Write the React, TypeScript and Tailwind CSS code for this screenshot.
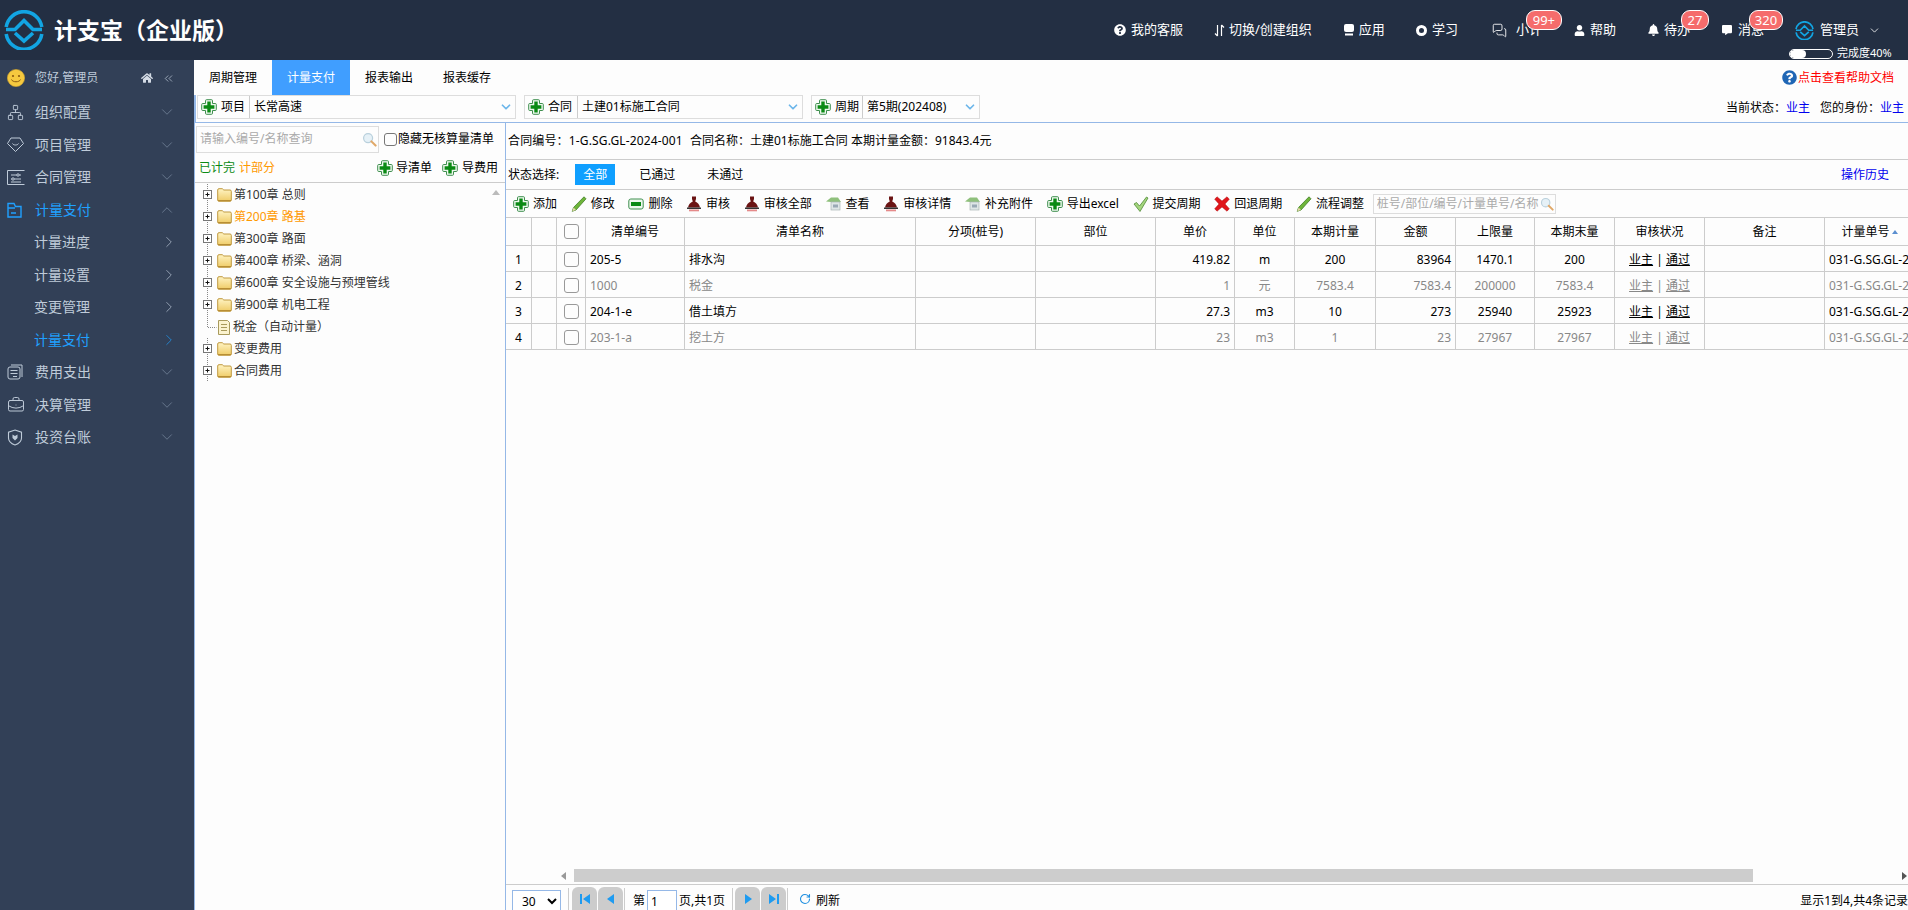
import {
  BriefcaseBusiness,
  ChevronDown,
  ChevronRight,
  ChevronUp,
  ChevronsLeft,
  MessagesSquare,
  Network,
  RotateCw,
} from 'lucide-react';
import { FaBell, FaCommentAlt, FaHome, FaQuestionCircle, FaUser } from 'react-icons/fa';

function GreenPlus() {
  return (
    <svg className="w-4 h-4 shrink-0" viewBox="0 0 16 16">
      <path
        d="M5.5 .7h5a1 1 0 0 1 1 1v2.8h2.8a1 1 0 0 1 1 1v5a1 1 0 0 1-1 1h-2.8v2.8a1 1 0 0 1-1 1h-5a1 1 0 0 1-1-1v-2.8H1.7a1 1 0 0 1-1-1v-5a1 1 0 0 1 1-1h2.8V1.7a1 1 0 0 1 1-1z"
        fill="#eef8ee"
        stroke="#3f8f4f"
        strokeWidth="1"
      />
      <path d="M6.3 2.6h3.4v3.7h3.7v3.4H9.7v3.7H6.3V9.7H2.6V6.3h3.7z" fill="#0a8a14" />
    </svg>
  );
}

function Pencil() {
  return (
    <svg className="w-4 h-4 shrink-0" viewBox="0 0 16 16">
      <path d="M13 .8l2 2L5 14l-3.8 1.3L2.6 11.4z" fill="#6fb53a" stroke="#3d7d24" strokeWidth=".8" />
      <path d="M2.6 11.4L5 14l-3.8 1.3z" fill="#e6d9a8" />
    </svg>
  );
}

function MinusBox() {
  return (
    <svg className="w-4 h-4 shrink-0" viewBox="0 0 16 16">
      <rect x=".8" y="3" width="14.4" height="10" rx="2" fill="#eef8ee" stroke="#3f8f4f" />
      <rect x="3" y="6" width="10" height="4" fill="#0a8a14" />
    </svg>
  );
}

function Stamp() {
  return (
    <svg className="w-4 h-4 shrink-0" viewBox="0 0 16 16">
      <path d="M6 .5h4v2.5l-.8 2.5c2.5 1 4.3 3 4.8 6H2c.5-3 2.3-5 4.8-6L6 3z" fill="#6b1414" />
      <rect x="1" y="11.5" width="14" height="1.5" fill="#333" />
      <path d="M3 13.5h10v1.8H3z" fill="#e58a8a" />
    </svg>
  );
}

function ViewDoc() {
  return (
    <svg className="w-4 h-4 shrink-0" viewBox="0 0 16 16">
      <path d="M0 5.5L5 1.5h7l3 4.5H5z" fill="#8fc07c" />
      <rect x="5" y="6" width="9" height="8" fill="#dfe6e6" stroke="#a9b5b5" strokeWidth=".7" />
      <rect x="7" y="8.5" width="5" height="3" fill="#9aa9b5" />
    </svg>
  );
}

function Check() {
  return (
    <svg className="w-4 h-4 shrink-0" viewBox="0 0 16 16">
      <path d="M1 8l2.5-1.5L6.5 10 13.5 1 15 2 7 15.5z" fill="#a5d67f" stroke="#3d7d24" strokeWidth=".7" />
    </svg>
  );
}

function RedX() {
  return (
    <svg className="w-4 h-4 shrink-0" viewBox="0 0 16 16">
      <path
        d="M3 .8L8 5 13 .8l2.3 2.4L11 8l4.3 4.8-2.3 2.4L8 11l-5 4.2-2.3-2.4L5 8 .7 3.2z"
        fill="#e0161b"
        stroke="#b30f12"
        strokeWidth=".5"
      />
    </svg>
  );
}

function Lens({ className }: { className: string }) {
  return (
    <svg className={className} viewBox="0 0 16 16">
      <circle cx="6.5" cy="6.5" r="4.8" fill="#e6f1f7" stroke="#b9d0dc" strokeWidth="1.3" />
      <path d="M10 10l4.5 4.5" stroke="#e0a868" strokeWidth="2.2" strokeLinecap="round" />
    </svg>
  );
}

function Folder() {
  return (
    <svg className="w-[15px] h-[16px] shrink-0" viewBox="0 0 15 16">
      <defs>
        <linearGradient id="folderFill" x1="0" y1="0" x2="0" y2="1">
          <stop offset="0" stopColor="#fff4c4" />
          <stop offset="1" stopColor="#efcb66" />
        </linearGradient>
      </defs>
      <path
        d="M.7 3a1.3 1.3 0 0 1 1.3-1.3h3.3L6.8 3H13a1.3 1.3 0 0 1 1.3 1.3V13a1.3 1.3 0 0 1-1.3 1.3H2A1.3 1.3 0 0 1 .7 13z"
        fill="url(#folderFill)"
        stroke="#c0993f"
      />
      <path d="M1 13.5h13" stroke="#b88e34" />
    </svg>
  );
}

function TreeNode({ leaf }: { leaf?: boolean }) {
  if (leaf) {
    return (
      <svg className="w-[28px] h-[22px] shrink-0" viewBox="0 0 28 22">
        <path d="M4.5 0v11.5h9" stroke="#888" strokeDasharray="1 1" fill="none" />
        <path d="M15.5 4.5h9l2 2v12h-11z" fill="#fbf3cf" stroke="#a89a5c" />
        <path d="M18 8.5h6M18 11.5h6M18 14.5h6" stroke="#a89a5c" />
      </svg>
    );
  }
  return (
    <svg className="w-[13px] h-[22px] shrink-0" viewBox="0 0 13 22">
      <path d="M4.5 0v22" stroke="#888" strokeDasharray="1 1" />
      <rect x=".5" y="6.5" width="8" height="8" fill="#fff" stroke="#777" />
      <path d="M2.5 10.5h4M4.5 8.5v4" stroke="#111" />
    </svg>
  );
}

function Logo({ className }: { className: string }) {
  return (
    <svg className={className} viewBox="0 0 40 40" fill="none" stroke="#12a5e3" strokeWidth="3.6">
      <path d="M2.2 17A18 18 0 0 1 37.8 17" />
      <path d="M2.2 24A18 18 0 0 0 37.8 24" />
      <path d="M2 19.5h9l9-9 9 9h9" />
      <path d="M11 23l9 8 9-8" />
    </svg>
  );
}

function Smiley() {
  return (
    <svg className="w-[18px] h-[18px] shrink-0" viewBox="0 0 18 18">
      <circle cx="9" cy="9" r="8.6" fill="#f5c93f" stroke="#d9a92d" strokeWidth=".6" />
      <circle cx="6" cy="7" r="1.1" fill="#8a5a10" />
      <circle cx="12" cy="7" r="1.1" fill="#8a5a10" />
      <path d="M4.5 10.5c1 3 8 3 9 0" fill="none" stroke="#8a5a10" strokeWidth="1" />
    </svg>
  );
}

function GemIcon() {
  return (
    <svg className="w-[17px] h-[17px]" viewBox="0 0 17 17" fill="none" stroke="#bfcbd9" strokeWidth="1">
      <path d="M4 2h9l3.5 5.5L8.5 15.5.5 7.5z" />
      <path d="M5.5 7.5c1 2 5 2 6 0" />
    </svg>
  );
}

function ContractIcon() {
  return (
    <svg className="w-[18px] h-[17px]" viewBox="0 0 18 17" fill="none" stroke="#bfcbd9" strokeWidth="1">
      <path d="M.5 1.5h17M.5 1.5v14h17" />
      <path d="M4 6h10M4 10h10M4 13h10" />
      <circle cx="11" cy="6" r="1.2" fill="#324057" />
      <circle cx="6" cy="10" r="1.2" fill="#324057" />
    </svg>
  );
}

function PayIcon() {
  return (
    <svg className="w-[15px] h-[16px]" viewBox="0 0 15 16" fill="none" stroke="#20a0ff" strokeWidth="1.4">
      <path d="M1 1.5h6l1.5 3H14V15H1z" />
      <path d="M1 6h7M4 11h5" />
    </svg>
  );
}

function ExpenseIcon() {
  return (
    <svg className="w-[16px] h-[16px]" viewBox="0 0 16 16" fill="none" stroke="#bfcbd9" strokeWidth="1">
      <path d="M4 1h11v12" />
      <rect x="1" y="3" width="12" height="12" rx="2" />
      <path d="M3.5 6.5h7M3.5 9.5h7M6 12.5h4" />
    </svg>
  );
}

function ShieldIcon() {
  return (
    <svg className="w-[16px] h-[17px]" viewBox="0 0 16 17" fill="none" stroke="#bfcbd9" strokeWidth="1.1">
      <path d="M8 1l6.5 2.2V9c0 3.5-3 5.8-6.5 7-3.5-1.2-6.5-3.5-6.5-7V3.2z" />
      <path d="M5.5 5.5L8 7l2.5-1.5V9L8 11.5 5.5 9z" fill="#bfcbd9" stroke="none" />
    </svg>
  );
}

type MenuItem = {
  label: string;
  icon?: React.ReactNode;
  arrow: 'down' | 'up' | 'right';
  active?: boolean;
};

const menu: MenuItem[] = [
  { label: '组织配置', icon: <Network className="w-[17px] h-[17px]" strokeWidth={1.3} color="#bfcbd9" />, arrow: 'down' },
  { label: '项目管理', icon: <GemIcon />, arrow: 'down' },
  { label: '合同管理', icon: <ContractIcon />, arrow: 'down' },
  { label: '计量支付', icon: <PayIcon />, arrow: 'up', active: true },
  { label: '计量进度', arrow: 'right' },
  { label: '计量设置', arrow: 'right' },
  { label: '变更管理', arrow: 'right' },
  { label: '计量支付', arrow: 'right', active: true },
  { label: '费用支出', icon: <ExpenseIcon />, arrow: 'down' },
  { label: '决算管理', icon: <BriefcaseBusiness className="w-[18px] h-[18px]" strokeWidth={1.3} color="#bfcbd9" />, arrow: 'down' },
  { label: '投资台账', icon: <ShieldIcon />, arrow: 'down' },
];

function Sidebar() {
  return (
    <aside className="w-[194px] shrink-0 bg-[#324057] text-[#bfcbd9]">
      <div className="h-[36px] flex items-center pl-[7px] pr-[19px] text-xs">
        <Smiley />
        <span className="ml-[10px]">您好,管理员</span>
        <FaHome className="ml-auto w-[12px] h-[12px] text-[#d5dce6]" />
        <ChevronsLeft className="ml-[9px] w-[13px] h-[13px]" strokeWidth={1.3} />
      </div>
      {menu.map((item, i) => (
        <div
          key={i}
          className={`h-[32.5px] flex items-center pr-[18px] text-sm ${item.active ? 'text-[#20a0ff]' : ''}`}
        >
          {item.icon ? (
            <span className="w-[35px] pl-[7px] flex shrink-0">{item.icon}</span>
          ) : (
            <span className="w-[34px] shrink-0" />
          )}
          <span>{item.label}</span>
          {item.arrow === 'down' && <ChevronDown className="ml-auto w-[18px] h-[18px] text-[#7f8fa6]" strokeWidth={0.9} />}
          {item.arrow === 'up' && <ChevronUp className="ml-auto w-[18px] h-[18px] text-[#7f8fa6]" strokeWidth={0.9} />}
          {item.arrow === 'right' && <ChevronRight className="ml-auto mr-[-2px] w-[18px] h-[18px]" strokeWidth={0.9} />}
        </div>
      ))}
    </aside>
  );
}

function Badge({ text, className }: { text: string; className: string }) {
  return (
    <span
      className={`absolute top-[-10px] h-[20px] flex items-center justify-center rounded-[9px] border border-white bg-[#f56c6c] text-[13px] text-white ${className}`}
    >
      {text}
    </span>
  );
}

function Header() {
  return (
    <header className="h-[60px] bg-[#232f43] flex items-center text-white text-[13px] shrink-0">
      <Logo className="ml-[4px] w-[40px] h-[40px]" />
      <span className="ml-[10px] text-[23px] font-bold">计支宝（企业版）</span>
      <div className="ml-[876px] flex items-center">
        <span className="flex items-center gap-[5px]">
          <FaQuestionCircle className="w-[12px] h-[12px]" />
          我的客服
        </span>
        <span className="ml-[31px] flex items-center gap-[4px]">
          <svg className="w-[11px] h-[13px]" viewBox="0 0 11 13" fill="none" stroke="#fff" strokeWidth="1.2">
            <path d="M3.5 1v11M1 9.5L3.5 12M7.5 12V1M7.5 1L10 3.5" />
          </svg>
          切换/创建组织
        </span>
        <span className="ml-[32px] flex items-center gap-[5px]">
          <svg className="w-[10px] h-[12px]" viewBox="0 0 10 12" fill="#fff">
            <rect x="0" y="0" width="10" height="8" rx="2" />
            <rect x="1" y="9.5" width="8" height="2" />
          </svg>
          应用
        </span>
        <span className="ml-[31px] flex items-center gap-[5px]">
          <svg className="w-[11px] h-[11px]" viewBox="0 0 11 11" fill="none" stroke="#fff" strokeWidth="3">
            <circle cx="5.5" cy="5.5" r="4" />
          </svg>
          学习
        </span>
        <span className="relative ml-[34px] flex items-center gap-[9px]">
          <MessagesSquare className="w-[15px] h-[15px]" strokeWidth={1.4} />
          小计
          <Badge text="99+" className="left-[34px] w-[36px]" />
        </span>
        <span className="ml-[32px] flex items-center gap-[5px]">
          <FaUser className="w-[11px] h-[11px]" />
          帮助
        </span>
        <span className="relative ml-[32px] flex items-center gap-[5px]">
          <FaBell className="w-[11px] h-[12px]" />
          待办
          <Badge text="27" className="left-[33px] w-[28px]" />
        </span>
        <span className="relative ml-[32px] flex items-center gap-[6px]">
          <FaCommentAlt className="w-[10px] h-[10px]" />
          消息
          <Badge text="320" className="left-[27px] w-[34px]" />
        </span>
        <span className="relative ml-[31px] flex items-center">
          <Logo className="w-[19px] h-[19px]" />
          <span className="ml-[6px]">管理员</span>
          <ChevronDown className="ml-[9px] w-[13px] h-[13px]" strokeWidth={1.5} />
          <span className="absolute left-[-6px] top-[25px] flex items-center whitespace-nowrap text-[11px]">
            <span className="w-[44px] h-[10px] rounded-[5px] border border-white overflow-hidden flex">
              <span className="w-[16px] bg-white rounded-[5px]" />
            </span>
            <span className="ml-[4px]">完成度40%</span>
          </span>
        </span>
      </div>
    </header>
  );
}

function Group({ label, value, className, labelClass }: { label: string; value: string; className: string; labelClass: string }) {
  return (
    <div className={`h-[24px] border border-[#ddd] flex items-center shrink-0 ${className}`}>
      <div className={`h-full flex items-center gap-[4px] pl-[3px] border-r border-[#ccc] shrink-0 ${labelClass}`}>
        <GreenPlus />
        {label}
      </div>
      <span className="ml-[4px]">{value}</span>
      <ChevronDown className="ml-auto mr-[2px] w-[14px] h-[14px] text-[#6cb6ea]" strokeWidth={3} />
    </div>
  );
}

const tree = [
  { label: '第100章 总则' },
  { label: '第200章 路基', orange: true },
  { label: '第300章 路面' },
  { label: '第400章 桥梁、涵洞' },
  { label: '第600章 安全设施与预埋管线' },
  { label: '第900章 机电工程' },
  { label: '税金（自动计量）', leaf: true },
  { label: '变更费用' },
  { label: '合同费用' },
];

function LeftPane() {
  return (
    <div className="w-[312px] shrink-0 border-x border-x-[#95b8e7] flex flex-col text-xs">
      <div className="h-[33px] flex items-center pb-px pl-px">
        <div className="w-[183px] h-[27px] border border-[#ddd] flex items-center">
          <input
            placeholder="请输入编号/名称查询"
            className="flex-1 min-w-0 pl-[3px] bg-transparent outline-none placeholder:text-[#aaa]"
          />
          <Lens className="w-[15px] h-[15px] mr-[1px]" />
        </div>
        <span className="ml-[5px] w-[13px] h-[13px] border border-[#777] rounded-[3px] shrink-0" />
        <span className="ml-[1px] whitespace-nowrap">隐藏无核算量清单</span>
      </div>
      <div className="h-[27px] flex items-center border-b border-[#ccc] pl-[4px] pb-[2px]">
        <span className="text-[#0a8a14]">已计完</span>
        <span className="ml-[4px] text-[#ff9900]">计部分</span>
        <span className="ml-auto flex items-center gap-[3px]">
          <GreenPlus />
          导清单
        </span>
        <span className="ml-[10px] mr-[7px] flex items-center gap-[4px]">
          <GreenPlus />
          导费用
        </span>
      </div>
      <div className="relative flex-1 pt-px pl-[8px]">
        <span className="absolute right-[5px] top-[7px] w-0 h-0 border-x-4 border-x-transparent border-b-[5px] border-b-[#bbb]" />
        {tree.map((n) => (
          <div key={n.label} className={`h-[22px] flex items-center ${n.orange ? 'text-[#ff9900]' : 'text-[#333]'}`}>
            {n.leaf ? (
              <TreeNode leaf />
            ) : (
              <>
                <TreeNode />
                <span className="ml-px">
                  <Folder />
                </span>
              </>
            )}
            <span className="ml-[2px]">{n.label}</span>
          </div>
        ))}
      </div>
    </div>
  );
}

const tools = [
  { icon: <GreenPlus />, label: '添加' },
  { icon: <Pencil />, label: '修改' },
  { icon: <MinusBox />, label: '删除' },
  { icon: <Stamp />, label: '审核' },
  { icon: <Stamp />, label: '审核全部' },
  { icon: <ViewDoc />, label: '查看' },
  { icon: <Stamp />, label: '审核详情' },
  { icon: <ViewDoc />, label: '补充附件' },
  { icon: <GreenPlus />, label: '导出excel' },
  { icon: <Check />, label: '提交周期' },
  { icon: <RedX />, label: '回退周期' },
  { icon: <Pencil />, label: '流程调整' },
];

const columns = [
  { title: '清单编号', width: 'w-[99px]' },
  { title: '清单名称', width: 'w-[231px]' },
  { title: '分项(桩号)', width: 'w-[120px]' },
  { title: '部位', width: 'w-[120px]' },
  { title: '单价', width: 'w-[79px]' },
  { title: '单位', width: 'w-[60px]' },
  { title: '本期计量', width: 'w-[81px]' },
  { title: '金额', width: 'w-[80px]' },
  { title: '上限量', width: 'w-[79px]' },
  { title: '本期末量', width: 'w-[80px]' },
  { title: '审核状况', width: 'w-[90px]' },
  { title: '备注', width: 'w-[120px]' },
];

const rows = [
  { code: '205-5', name: '排水沟', price: '419.82', unit: 'm', qty: '200', amount: '83964', limit: '1470.1', total: '200' },
  { code: '1000', name: '税金', price: '1', unit: '元', qty: '7583.4', amount: '7583.4', limit: '200000', total: '7583.4', gray: true },
  { code: '204-1-e', name: '借土填方', price: '27.3', unit: 'm3', qty: '10', amount: '273', limit: '25940', total: '25923' },
  { code: '203-1-a', name: '挖土方', price: '23', unit: 'm3', qty: '1', amount: '23', limit: '27967', total: '27967', gray: true },
];

const cell = 'h-[26px] border-r border-b border-[#ccc] px-[4px] pt-[2px] overflow-hidden whitespace-nowrap';
const headCell = 'h-[28px] border-r border-b border-[#ccc] font-normal text-center';
const box = 'block mx-auto w-[15px] h-[15px] border border-[#999] rounded-[3px]';

function DataTable() {
  return (
    <div className="flex-1 min-h-0 overflow-hidden">
      <table className="w-[1409px] table-fixed border-separate border-spacing-0 text-xs">
        <colgroup>
          <col className="w-[26px]" />
          <col className="w-[25px]" />
          <col className="w-[29px]" />
          {columns.map((c) => (
            <col key={c.title} className={c.width} />
          ))}
          <col className="w-[90px]" />
        </colgroup>
        <thead>
          <tr>
            <th className={headCell} />
            <th className={headCell} />
            <th className={headCell}>
              <span className={box} />
            </th>
            {columns.map((c) => (
              <th key={c.title} className={headCell}>
                {c.title}
              </th>
            ))}
            <th className={`${headCell} whitespace-nowrap overflow-hidden`}>
              计量单号
              <span className="inline-block ml-[2px] mb-[2px] w-0 h-0 border-x-[3px] border-x-transparent border-b-4 border-b-[#5b8fd0]" />
            </th>
          </tr>
        </thead>
        <tbody>
          {rows.map((r, i) => (
            <tr key={r.code} className={r.gray ? 'text-[#888]' : 'text-black'}>
              <td className={`${cell} text-center text-black`}>{i + 1}</td>
              <td className={cell} />
              <td className={cell}>
                <span className={box} />
              </td>
              <td className={cell}>{r.code}</td>
              <td className={cell}>{r.name}</td>
              <td className={cell} />
              <td className={cell} />
              <td className={`${cell} text-right`}>{r.price}</td>
              <td className={`${cell} text-center`}>{r.unit}</td>
              <td className={`${cell} text-center`}>{r.qty}</td>
              <td className={`${cell} text-right`}>{r.amount}</td>
              <td className={`${cell} text-center`}>{r.limit}</td>
              <td className={`${cell} text-center`}>{r.total}</td>
              <td className={`${cell} text-center`}>
                <span className="underline">业主</span> | <span className="underline">通过</span>
              </td>
              <td className={cell} />
              <td className={cell}>031-G.SG.GL-2024-001</td>
            </tr>
          ))}
        </tbody>
      </table>
    </div>
  );
}

function PagerButton({ children }: { children: React.ReactNode }) {
  return (
    <span className="w-[25px] h-[23px] bg-[#ccc] rounded-t-[6px] flex items-center justify-center shrink-0">
      <svg className="w-[10px] h-[10px]" viewBox="0 0 10 10" fill="#1e9bf0">
        {children}
      </svg>
    </span>
  );
}

function Footer() {
  return (
    <div className="h-[26px] border-t border-[#ccc] flex items-start text-xs shrink-0">
      <select className="mt-[5px] ml-[6px] w-[49px] h-[22px] border border-[#95b8e7] pl-[5px] bg-white text-xs outline-none">
        <option>30</option>
      </select>
      <span className="ml-[7px] mt-[3px] w-px h-[23px] bg-[#ccc]" />
      <div className="ml-[3px] mt-[2px] flex gap-px">
        <PagerButton>
          <path d="M0 0h2v10H0zM10 0v10L3 5z" />
        </PagerButton>
        <PagerButton>
          <path d="M8 0v10L1 5z" />
        </PagerButton>
      </div>
      <span className="ml-[1px] mt-[3px] w-px h-[23px] bg-[#ccc]" />
      <span className="ml-[8px] mt-[8px]">第</span>
      <input defaultValue="1" className="ml-[2px] mt-[5px] w-[30px] h-[22px] border border-[#95b8e7] pl-[3px] bg-white outline-none" />
      <span className="ml-[2px] mt-[8px]">页,共1页</span>
      <span className="ml-[7px] mt-[3px] w-px h-[23px] bg-[#ccc]" />
      <div className="ml-[2px] mt-[2px] flex gap-px">
        <PagerButton>
          <path d="M2 0v10l7-5z" />
        </PagerButton>
        <PagerButton>
          <path d="M0 0v10l7-5zM8 0h2v10H8z" />
        </PagerButton>
      </div>
      <span className="ml-[1px] mt-[3px] w-px h-[23px] bg-[#ccc]" />
      <RotateCw className="ml-[11px] mt-[8px] w-[12px] h-[12px] text-[#1e8fe0]" strokeWidth={2.2} />
      <span className="ml-[5px] mt-[8px]">刷新</span>
      <span className="ml-auto mt-[8px] whitespace-nowrap">显示1到4,共4条记录</span>
    </div>
  );
}

function RightPane() {
  return (
    <div className="flex-1 min-w-0 flex flex-col text-xs text-black">
      <div className="h-[37px] border-b border-[#ccc] flex items-center pl-[2px] shrink-0 whitespace-nowrap">
        <span className="w-[182px] tracking-[0.15px]">合同编号：1-G.SG.GL-2024-001</span>
        <span className="w-[161px]">合同名称：土建01标施工合同</span>
        <span>本期计量金额：91843.4元</span>
      </div>
      <div className="h-[30px] border-b border-[#ccc] flex items-center pl-[2px] shrink-0">
        <span>状态选择:</span>
        <span className="ml-[16px] w-[40px] h-[21px] bg-[#0f9fff] text-white flex items-center justify-center">全部</span>
        <span className="ml-[24px]">已通过</span>
        <span className="ml-[32px]">未通过</span>
        <span className="ml-auto mr-[19px] text-[#0000ee]">操作历史</span>
      </div>
      <div className="h-[28px] border-b border-[#ccc] flex items-center gap-[13.7px] pl-[7px] shrink-0">
        {tools.map((t) => (
          <span key={t.label} className="flex items-center gap-[4px] whitespace-nowrap">
            {t.icon}
            {t.label}
          </span>
        ))}
        <div className="-ml-[5px] w-[183px] h-[20px] border border-[#ddd] flex items-center shrink-0">
          <input
            placeholder="桩号/部位/编号/计量单号/名称"
            className="flex-1 min-w-0 pl-[3px] bg-transparent outline-none placeholder:text-[#aaa]"
          />
          <Lens className="w-[14px] h-[14px] mr-[1px]" />
        </div>
      </div>
      <DataTable />
      <div className="h-[18px] flex items-start pt-[3px] pl-[55px] pr-[1px] shrink-0">
        <span className="mt-[3px] w-0 h-0 border-y-[4px] border-y-transparent border-r-[5px] border-r-[#999]" />
        <span className="ml-[8px] w-[1179px] h-[13px] bg-[#cdcdcd]" />
        <span className="ml-auto mt-[3px] w-0 h-0 border-y-[4px] border-y-transparent border-l-[5px] border-l-[#555]" />
      </div>
      <Footer />
    </div>
  );
}

export default function App() {
  return (
    <div className="w-[1908px] h-[910px] overflow-hidden flex flex-col bg-[#fdfdfd] [font-family:'Noto_Sans','Noto_Sans_CJK_SC',sans-serif]">
      <Header />
      <div className="flex-1 min-h-0 flex">
        <Sidebar />
        <main className="flex-1 min-w-0 flex flex-col">
          <div className="h-[35px] flex items-stretch text-xs text-black shrink-0">
            <span className="w-[78px] flex items-center justify-center">周期管理</span>
            <span className="w-[78px] flex items-center justify-center bg-[#409eff] text-white">计量支付</span>
            <span className="w-[78px] flex items-center justify-center">报表输出</span>
            <span className="w-[78px] flex items-center justify-center">报表缓存</span>
            <span className="ml-auto mr-[14px] flex items-center gap-px text-[#ff0000]">
              <FaQuestionCircle className="w-[15px] h-[15px] text-[#1f66b5]" />
              点击查看帮助文档
            </span>
          </div>
          <div className="h-[28px] border-b border-l-2 border-[#95b8e7] flex items-start gap-[8px] pl-px text-xs text-black shrink-0">
            <Group label="项目" value="长常高速" className="w-[319px]" labelClass="w-[52px]" />
            <Group label="合同" value="土建01标施工合同" className="w-[279px]" labelClass="w-[53px]" />
            <Group label="周期" value="第5期(202408)" className="w-[169px]" labelClass="w-[51px]" />
            <span className="ml-auto mr-[4px] mt-[5px]">
              当前状态：<span className="text-[#0000ee]">业主</span>
              <span className="ml-[10px]">您的身份：</span>
              <span className="text-[#0000ee]">业主</span>
            </span>
          </div>
          <div className="flex-1 min-h-0 flex">
            <LeftPane />
            <RightPane />
          </div>
        </main>
      </div>
    </div>
  );
}
